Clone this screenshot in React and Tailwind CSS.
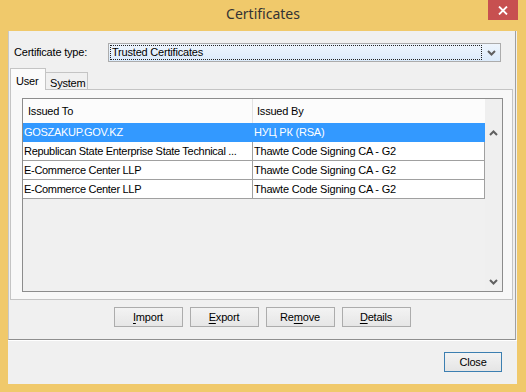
import React from "react";

const rows = [
  { to: "GOSZAKUP.GOV.KZ", by: "НУЦ РК (RSA)", selected: true },
  { to: "Republican State Enterprise State Technical ...", by: "Thawte Code Signing CA - G2" },
  { to: "E-Commerce Center LLP", by: "Thawte Code Signing CA - G2" },
  { to: "E-Commerce Center LLP", by: "Thawte Code Signing CA - G2" },
];

const Chevron = ({ up }) => (
  <svg width="9" height="6" viewBox="0 0 9 6">
    <polyline
      points={up ? "1,5 4.5,1.5 8,5" : "1,1 4.5,4.5 8,1"}
      fill="none"
      stroke="#606060"
      strokeWidth="2"
    />
  </svg>
);

const Btn = ({ children }) => (
  <button className="h-[20px] w-[69px] border border-[#acacac] bg-linear-to-b from-[#f3f3f3] to-[#e6e6e6] text-black leading-[18px]">
    {children}
  </button>
);

export default function App() {
  return (
    <div className="w-[526px] h-[392px] bg-[#f0c96b] flex flex-col font-['Liberation_Sans',Arial,sans-serif] text-[11px] tracking-[-0.2px] text-black">
      {/* Title bar */}
      <div className="h-[31px] shrink-0 grid grid-cols-[1fr_auto_1fr]">
        <div />
        <div className="pt-[4px] text-[14px] leading-[20px] tracking-normal text-[#333] font-['Noto_Sans',sans-serif]">
          Certificates
        </div>
        <div className="flex justify-end pr-[8px]">
          <div className="w-[30px] h-[20px] bg-[#c75050] flex items-center justify-center">
            <svg width="10" height="9" viewBox="0 0 10 9">
              <path d="M1 0.5 L9 8.5 M9 0.5 L1 8.5" stroke="#fff" strokeWidth="1.8" />
            </svg>
          </div>
        </div>
      </div>

      {/* Client area */}
      <div className="ml-[8px] mr-[9px] h-[353px] bg-[#f0f0f0] flex flex-col">
        <div className="h-[309px] w-[508px] border-l border-l-[#c8c8c8] border-r border-b border-r-[#a0a0a0] border-b-[#8e8e8e] flex flex-col">
          {/* Certificate type */}
          <div className="pt-[12px] pl-[5px] flex items-center">
            <div className="w-[94px]">Certificate type:</div>
            <div className="w-[393px] h-[19px] border border-[#acacac] bg-linear-to-b from-[#eef5fd] to-[#dcebfb] flex items-center">
              <div className="ml-[1px] w-[372px] h-[15px] border border-dotted border-[#222] pl-[1px] leading-[13px]">
                Trusted Certificates
              </div>
              <div className="flex-1 flex justify-center pt-[1px]">
                <Chevron />
              </div>
            </div>
          </div>

          {/* Tabs */}
          <div className="mt-[6px] pl-[1px] h-[21px] flex items-end">
            <div className="relative z-10 -mb-px w-[36px] h-[22px] border border-b-0 border-[#c4c4c4] bg-[#fbfbfb] pl-[5px] pt-[4px]">
              User
            </div>
            <div className="w-[42px] h-[17px] border border-l-0 border-b-0 border-[#c4c4c4] bg-[#f0f0f0] pl-[4px] pt-[2px]">
              System
            </div>
          </div>
          <div className="ml-[1px] w-[503px] h-[211px] border border-[#c4c4c4] bg-[#f8f8f8] pl-[11px] pt-[8px]">
            {/* List */}
            <div className="w-[481px] h-[194px] border border-[#8c8c8c] bg-[#f0f0f0] flex">
              <div className="w-[462px] flex flex-col">
                <div className="h-[24px] bg-[#fcfcfc] flex items-center">
                  <div className="w-[230px] h-full border-r border-[#e3e3e3] pl-[5px] flex items-center">
                    Issued To
                  </div>
                  <div className="flex-1 pl-[4px]">Issued By</div>
                </div>
                {rows.map((r, i) => (
                  <div
                    key={i}
                    className={`h-[19px] flex border-b ${
                      r.selected ? "bg-[#3399ff] text-white border-[#3399ff]" : "bg-white border-[#a0a0a0]"
                    }`}
                  >
                    <div
                      className={`w-[230px] pl-[1px] leading-[18px] whitespace-nowrap tracking-[-0.3px] border-r ${
                        r.selected ? "border-[#3399ff]" : "border-[#a0a0a0]"
                      }`}
                    >
                      {r.to}
                    </div>
                    <div
                      className={`flex-1 pl-[1px] leading-[18px] whitespace-nowrap border-r ${
                        r.selected ? "border-[#3399ff]" : "border-[#a0a0a0]"
                      }`}
                    >
                      {r.by}
                    </div>
                  </div>
                ))}
              </div>
              {/* Scrollbar */}
              <div className="w-[17px] flex flex-col bg-[#efefef]">
                <div className="h-[24px]" />
                <div className="h-[19px] flex items-center justify-center">
                  <Chevron up />
                </div>
                <div className="flex-1" />
                <div className="h-[19px] flex items-center justify-center">
                  <Chevron />
                </div>
              </div>
            </div>
          </div>

          {/* Action buttons */}
          <div className="mt-[7px] flex justify-center gap-[7px]">
            <Btn>
              <u className="underline-offset-2">I</u>mport
            </Btn>
            <Btn>
              <u className="underline-offset-2">E</u>xport
            </Btn>
            <Btn>
              Re<u className="underline-offset-2">m</u>ove
            </Btn>
            <Btn>
              <u className="underline-offset-2">D</u>etails
            </Btn>
          </div>
        </div>
        <div className="h-px bg-white" />

        {/* Close */}
        <div className="flex justify-end pr-[15px] pt-[11px]">
          <button className="w-[58px] h-[20px] border border-[#3c7fb1] bg-linear-to-b from-[#f3f3f3] to-[#e5e5e5] leading-[18px]">
            Close
          </button>
        </div>
      </div>
    </div>
  );
}
